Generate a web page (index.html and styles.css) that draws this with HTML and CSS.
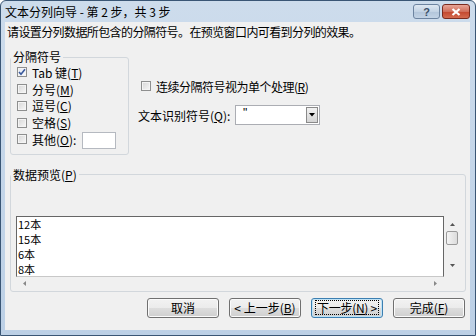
FILE: index.html
```html
<!DOCTYPE html>
<html lang="zh-CN">
<head>
  <meta charset="UTF-8">
  <title>文本分列向导 - 第 2 步，共 3 步</title>
  <link rel="stylesheet" href="styles.css">
</head>
<body>
  <div class="window">
    <div class="titlebar">
      <span class="title">文本分列向导 - 第 2 步，共 3 步</span>
      <div class="caption-buttons">
        <span class="cap-btn help">?</span>
        <span class="cap-btn close">
          <svg width="10" height="8" viewBox="0 0 10 8"><path d="M1.5 1 L8.5 7 M8.5 1 L1.5 7" stroke="#fff" stroke-width="2.2"/></svg>
        </span>
      </div>
    </div>

    <div class="client">
      <p class="intro">请设置分列数据所包含的分隔符号。在预览窗口内可看到分列的效果。</p>

      <div class="options">
        <fieldset class="group delims">
          <legend>分隔符号</legend>
          <div class="delim-list">
            <div class="row"><span class="box checked"><svg width="8" height="8" viewBox="0 0 8 8"><path d="M1 4 L3 6.3 L7 1.3" fill="none" stroke="#3a5a9c" stroke-width="1.6"/></svg></span>Tab 键(<u>T</u>)</div>
            <div class="row"><span class="box"></span>分号(<u>M</u>)</div>
            <div class="row"><span class="box"></span>逗号(<u>C</u>)</div>
            <div class="row"><span class="box"></span>空格(<u>S</u>)</div>
            <div class="row"><span class="box"></span>其他(<u>O</u>):<span class="other-input"></span></div>
          </div>
        </fieldset>

        <div class="side">
          <div class="row consecutive"><span class="box"></span>连续分隔符号视为单个处理(<u>R</u>)</div>
          <div class="qualifier">
            <span class="qualifier-label">文本识别符号(<u>Q</u>):</span>
            <div class="combo">
              <span class="combo-value">"</span>
              <span class="combo-drop"><svg width="6" height="4" viewBox="0 0 6 4"><path d="M0 0 H6 L3 3.5 Z" fill="#000"/></svg></span>
            </div>
          </div>
        </div>
      </div>

      <fieldset class="group preview">
        <legend>数据预览(<u>P</u>)</legend>
        <div class="preview-body">
          <div class="preview-area">
            <div class="list">
              <div class="line">12本</div>
              <div class="line">15本</div>
              <div class="line">6本</div>
              <div class="line">8本</div>
            </div>
            <div class="vscroll">
              <svg class="arrow" width="5" height="3" viewBox="0 0 5 3"><path d="M0 3 H5 L2.5 0 Z" fill="#555"/></svg>
              <span class="thumb"></span>
              <svg class="arrow down" width="5" height="3" viewBox="0 0 5 3"><path d="M0 0 H5 L2.5 3 Z" fill="#555"/></svg>
            </div>
          </div>
          <div class="hscroll">
            <svg width="3" height="5" viewBox="0 0 3 5"><path d="M3 0 V5 L0 2.5 Z" fill="#888"/></svg>
            <svg width="3" height="5" viewBox="0 0 3 5"><path d="M0 0 V5 L3 2.5 Z" fill="#888"/></svg>
          </div>
        </div>
      </fieldset>

      <div class="buttons">
        <button class="btn">取消</button>
        <button class="btn">&lt; 上一步(<u>B</u>)</button>
        <button class="btn default"><span class="focus">下一步(<u>N</u>) &gt;</span></button>
        <button class="btn">完成(<u>F</u>)</button>
      </div>
    </div>
  </div>
</body>
</html>
```

FILE: styles.css
```css
* {
  box-sizing: border-box;
}
body {
  margin: 0;
  font-family: "Noto Sans CJK SC", "Liberation Sans", sans-serif;
  font-size: 12px;
  color: #000;
  background: #fff;
}
u {
  text-decoration: underline;
}
.window {
  width: 476px;
  height: 336px;
  border: 1px solid #3a5675;
  border-radius: 6px 6px 0 0;
  background: linear-gradient(#cddcec, #bcd0e6);
  padding: 0 5px 5px 4px;
  display: flex;
  flex-direction: column;
}
.titlebar {
  height: 21px;
  display: flex;
  align-items: center;
  justify-content: space-between;
}
.title {
  line-height: 16px;
  color: #000;
}
.caption-buttons {
  display: flex;
  gap: 2px;
}
.cap-btn {
  height: 15px;
  border: 1px solid #6d84a0;
  border-radius: 3px;
  display: flex;
  align-items: center;
  justify-content: center;
}
.help {
  width: 27px;
  background: linear-gradient(#dfe8f2, #c3d3e4 50%, #b2c5da 51%, #c2d3e5);
  color: #3b4f68;
  font-family: "Liberation Sans", sans-serif;
  font-size: 11px;
  font-weight: bold;
}
.close {
  width: 28px;
  border-color: #7a2b1f;
  background: linear-gradient(#e8a597, #d06f5c 50%, #c3462e 51%, #d36a4f);
}
.client {
  flex: 1;
  background: #f0f0f0;
}
.intro {
  margin: 2px 0 0 2px;
  line-height: 16px;
  letter-spacing: -0.6px;
}
.options {
  display: flex;
  gap: 10px;
  margin: 10px 0 0 5px;
}
.group {
  margin: 0;
  padding: 0;
  min-width: 0;
  border: 1px solid #d2d7dc;
  border-radius: 3px;
}
.group legend {
  padding: 0 2px;
  line-height: 14px;
}
.delims {
  width: 119px;
}
.delim-list {
  padding: 0 0 6px 6px;
}
.row {
  height: 16.75px;
  display: flex;
  align-items: center;
  white-space: nowrap;
}
.box {
  width: 10px;
  height: 10px;
  margin-right: 5px;
  border: 1px solid #8e8f8f;
  background: linear-gradient(135deg, #d6d6d6, #f8f8f8);
  box-shadow: inset 0 0 0 1px #f4f4f4;
  display: flex;
  align-items: center;
  justify-content: center;
}
.box.checked {
  background: linear-gradient(135deg, #e3e8f2, #fafbfd);
}
.other-input {
  width: 34px;
  height: 17px;
  margin: 3px 0 0 6px;
  background: #fff;
  border: 1px solid #b5b9c0;
}
.side {
  padding-top: 28px;
}
.consecutive {
  height: 16px;
  padding-left: 2px;
  letter-spacing: -0.5px;
}
.qualifier {
  display: flex;
  align-items: center;
  margin-top: 11px;
  height: 20px;
}
.qualifier-label {
  width: 97px;
  margin-left: -1px;
}
.combo {
  width: 85px;
  height: 20px;
  background: #fff;
  border: 1px solid #abadb3;
  display: flex;
  justify-content: space-between;
  padding: 1px;
}
.combo-value {
  padding-left: 6px;
  line-height: 12px;
  font-family: "Liberation Sans", sans-serif;
}
.combo-drop {
  width: 12px;
  border: 1px solid #8a8a8a;
  background: linear-gradient(#f2f2f2, #d4d4d4);
  display: flex;
  align-items: center;
  justify-content: center;
}
.preview {
  width: 456px;
  margin: 13px 0 0 5px;
}
.preview-body {
  padding: 34px 0 0 5px;
}
.preview-area {
  display: flex;
}
.list {
  width: 428px;
  height: 61px;
  background: #fff;
  border: 1px solid #666;
  border-bottom-color: #c8c8c8;
  overflow: hidden;
  font-size: 11px;
}
.line {
  height: 15px;
  line-height: 15px;
  padding-left: 1px;
}
.vscroll {
  width: 16px;
  height: 61px;
  display: flex;
  flex-direction: column;
  align-items: center;
  padding-top: 7px;
}
.thumb {
  width: 12px;
  height: 14px;
  margin-top: 5px;
  border: 1px solid #9a9a9a;
  border-radius: 2px;
  background: linear-gradient(90deg, #f4f4f4, #dcdcdc);
}
.arrow.down {
  margin-top: 19px;
}
.hscroll {
  width: 428px;
  height: 14px;
  display: flex;
  align-items: center;
  justify-content: space-between;
  padding: 0 7px;
}
.buttons {
  display: flex;
  justify-content: flex-end;
  gap: 10px;
  margin-top: 6px;
  padding-right: 5px;
}
.btn {
  width: 72px;
  height: 20px;
  padding: 0;
  border: 1px solid #707070;
  border-radius: 3px;
  background: linear-gradient(#f2f2f2, #ebebeb 50%, #dddddd 51%, #cfcfcf);
  box-shadow: inset 0 0 0 1px #fbfbfb;
  font: inherit;
  color: #000;
  white-space: nowrap;
  display: flex;
  align-items: center;
  justify-content: center;
}
.btn.default {
  border-color: #3c7fb1;
  box-shadow: inset 0 0 0 1px #bfe3f7;
}
.focus {
  border: 1px dotted #000;
  padding: 0 1px;
  line-height: 13px;
  letter-spacing: -0.3px;
}
```
